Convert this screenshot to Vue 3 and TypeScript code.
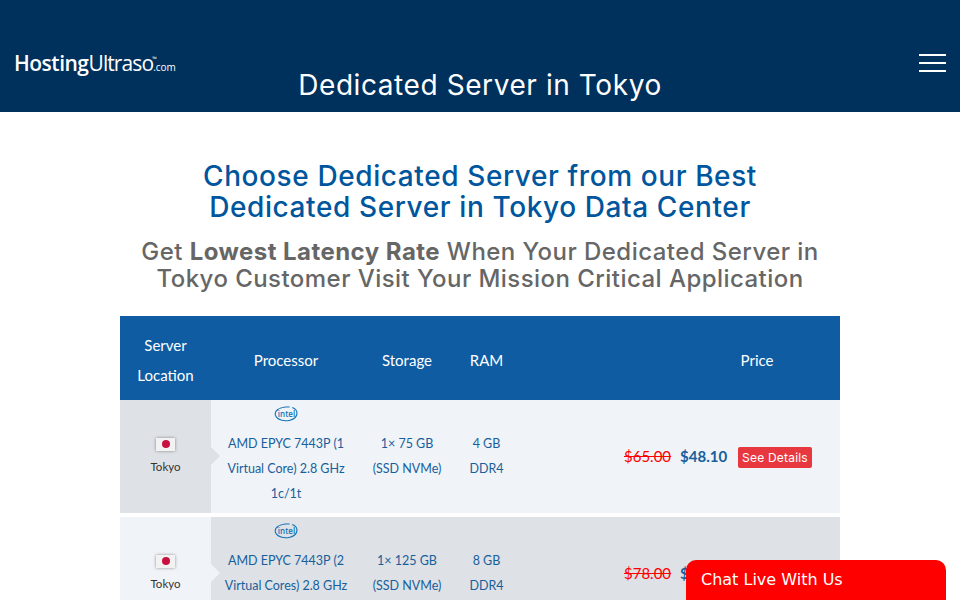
<script setup lang="ts">
interface Plan {
  cpu: string[]
  storage: string[]
  ram: string[]
  oldPrice: string
  price: string
}

const plans: Plan[] = [
  {
    cpu: ['AMD EPYC 7443P (1', 'Virtual Core) 2.8 GHz', '1c/1t'],
    storage: ['1× 75 GB', '(SSD NVMe)'],
    ram: ['4 GB', 'DDR4'],
    oldPrice: '$65.00',
    price: '$48.10',
  },
  {
    cpu: ['AMD EPYC 7443P (2', 'Virtual Cores) 2.8 GHz', '2c/2t'],
    storage: ['1× 125 GB', '(SSD NVMe)'],
    ram: ['8 GB', 'DDR4'],
    oldPrice: '$78.00',
    price: '$57.70',
  },
]
</script>

<template>
  <header class="topbar">
    <div class="logo">
      <b>Hosting</b><span>Ultraso</span><small>.com<sup>™</sup></small>
    </div>
    <h1>Dedicated Server in Tokyo</h1>
    <div class="burger"><i /><i /><i /></div>
  </header>

  <main class="content">
    <h2>Choose Dedicated Server from our Best<br />Dedicated Server in Tokyo Data Center</h2>
    <h3>
      Get <strong>Lowest Latency Rate</strong> When Your Dedicated Server in<br />
      Tokyo Customer Visit Your Mission Critical Application
    </h3>

    <section class="table">
      <div class="row head">
        <div>Server<br />Location</div>
        <div>Processor</div>
        <div>Storage</div>
        <div>RAM</div>
        <div class="price-head">Price</div>
      </div>

      <div v-for="(plan, i) in plans" :key="plan.price" class="row plan" :class="{ alt: i % 2 === 1 }">
        <div class="location">
          <span class="flag"><em /></span>
          <span class="city">Tokyo</span>
        </div>
        <div class="cpu">
          <svg class="intel" viewBox="0 0 24 16" width="24" height="16">
            <path d="M4 3.200C1.400 5 .6 8 2 10.600c2 3.600 8.600 5 14 3.600 4-1 6.800-3.600 7-6.800.1-2.800-1.800-5-4.800-6" fill="none" stroke="#1474b8" stroke-width="1.100" />
            <path d="M3 4C6 1.600 11 .6 15.600 1" fill="none" stroke="#1474b8" stroke-width="1" />
            <text x="12.500" y="11" text-anchor="middle">intel</text>
          </svg>
          <p v-for="line in plan.cpu" :key="line">{{ line }}</p>
        </div>
        <div class="cell">
          <p v-for="line in plan.storage" :key="line">{{ line }}</p>
        </div>
        <div class="cell">
          <p v-for="line in plan.ram" :key="line">{{ line }}</p>
        </div>
        <div class="price">
          <s>{{ plan.oldPrice }}</s>
          <b>{{ plan.price }}</b>
          <a>See Details</a>
        </div>
      </div>
    </section>
  </main>

  <aside class="chat">Chat Live With Us</aside>
</template>

<style scoped>
.topbar {
  height: 112px;
  box-sizing: border-box;
  background: #00305c;
  color: #fff;
  display: grid;
  grid-template-columns: 1fr auto 1fr;
  align-items: end;
  padding: 0 15px 9px;
}

.logo {
  font-family: 'Open Sans', sans-serif;
  font-size: 21px;
  line-height: 28px;
  letter-spacing: -0.5px;
  white-space: nowrap;
  margin-bottom: 22px;
  margin-left: -1px;
}

.logo b {
  font-weight: 600;
}

.logo span {
  font-weight: 400;
  letter-spacing: -0.9px;
}

.logo small {
  position: relative;
  font-size: 10px;
  letter-spacing: 0;
}

/* the trademark sign sits over the start of .com */
.logo sup {
  position: absolute;
  left: -1px;
  top: -5px;
  font-size: 6px;
  line-height: 8px;
}

h1 {
  margin: 0;
  font-family: Inter, sans-serif;
  font-size: 28px;
  font-weight: 400;
  line-height: 36px;
  letter-spacing: 0.58px;
}

.burger {
  justify-self: end;
  display: flex;
  flex-direction: column;
  gap: 6px;
  width: 27px;
  margin-bottom: 31px;
  margin-right: -1px;
}

.burger i {
  height: 2px;
  background: #fff;
}

.content {
  width: 720px;
  margin: 0 auto;
  padding-top: 49px;
  text-align: center;
}

h2 {
  margin: 0;
  font-family: Inter, sans-serif;
  font-size: 28px;
  font-weight: 500;
  line-height: 31px;
  letter-spacing: 0.6px;
  color: #00569d;
}

h3 {
  margin: 15px 0 0;
  font-family: Inter, sans-serif;
  font-size: 24px;
  font-weight: 500;
  line-height: 27px;
  letter-spacing: 0.45px;
  color: #666;
}

h3 strong {
  font-weight: 700;
}

.table {
  margin-top: 24px;
  font-family: Lato, sans-serif;
}

.row {
  display: grid;
  grid-template-columns: 91px 150px 92px 67px 1fr;
  text-align: center;
}

.head {
  height: 84px;
  box-sizing: border-box;
  padding-top: 4px;
  background: #0f5ca3;
  color: #fff;
  font-size: 15px;
  line-height: 30px;
  align-items: center;
}

.price-head {
  padding-left: 154px;
}

.plan {
  height: 113px;
  margin-bottom: 4px;
  background: #f0f3f7;
  color: #175f9c;
  font-size: 12.500px;
  line-height: 25px;
}

.plan p {
  margin: 0;
}

.location {
  position: relative;
  box-sizing: border-box;
  padding-bottom: 1px;
  background: #dee1e5;
  color: #333;
  font-size: 11.500px;
  line-height: 16px;
  display: flex;
  flex-direction: column;
  align-items: center;
  justify-content: center;
  gap: 8px;
}

.location::after {
  content: '';
  position: absolute;
  left: 100%;
  top: 47px;
  border: 9px solid transparent;
  border-left-color: #dee1e5;
}

.flag {
  width: 19px;
  height: 13px;
  background: #f2f2f2;
  box-shadow: 0 0 3px rgba(0, 0, 0, 0.4);
  display: flex;
  align-items: center;
  justify-content: center;
}

.flag em {
  width: 8px;
  height: 8px;
  border-radius: 50%;
  background: #c8113f;
}

.alt {
  background: #dee1e5;
}

.alt .location {
  background: #f0f3f7;
}

.alt .location::after {
  border-left-color: #f0f3f7;
}

.cpu {
  padding-top: 6px;
}

.intel {
  display: block;
  margin: 0 auto 9px;
}

.intel text {
  font-family: 'Open Sans', sans-serif;
  font-size: 8px;
  font-weight: 600;
  fill: #1474b8;
}

.cell {
  padding-top: 31px;
}

.price {
  display: flex;
  align-items: center;
  gap: 9px;
  height: 113px;
  padding-left: 104px;
  font-size: 15px;
  box-sizing: border-box;
}

.price s {
  color: #f00;
}

.price b {
  color: #175f9c;
  font-weight: 700;
}

.price a {
  margin: 2px 0 0 2px;
  padding: 0 4px;
  background: #e8383f;
  border-radius: 2px;
  color: #fff;
  font-family: Inter, sans-serif;
  font-size: 12px;
  line-height: 21px;
  letter-spacing: 0.2px;
}

.chat {
  position: fixed;
  left: 686px;
  top: 560px;
  width: 260px;
  height: 60px;
  box-sizing: border-box;
  padding: 10px 15px;
  background: #f00;
  border-radius: 10px 10px 0 0;
  color: #fff;
  font-family: 'DejaVu Sans', sans-serif;
  font-size: 16px;
  line-height: 20px;
}
</style>

<style>
html,
body {
  overflow: hidden;
  height: 100%;
  background: #fff;
}
</style>
